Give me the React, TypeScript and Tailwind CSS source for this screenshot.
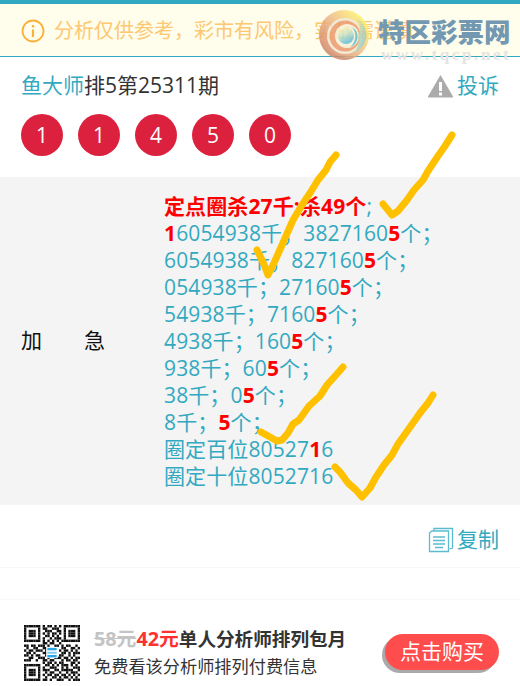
const font = { fontFamily: '"Open Sans","Noto Sans CJK SC",sans-serif' };

const R = ({ children }: { children: React.ReactNode }) => (
  <b className="font-bold text-[#ff0000]">{children}</b>
);

const QR_ROWS = [
  "111111101011010101111111",
  "100000101100111001000001",
  "101110100111001101011101",
  "101110101010110101011101",
  "101110100110101001011101",
  "100000101001011101000001",
  "111111101010101011111111",
  "000000001101100100000000",
  "110110111010011010110010",
  "010011001100000011001101",
  "101101110100000101101010",
  "011010001100000011010111",
  "110101100100000110010100",
  "001100111010011101101011",
  "111001001101100010110110",
  "000000001011010110001101",
  "111111100110101011101010",
  "100000101001110010100111",
  "101110101110011011111001",
  "101110100101100100101110",
  "101110101011011011010101",
  "100000100100110101101010",
  "111111101101001110010111",
];

function QR() {
  return (
    <svg width="56" height="56" viewBox="0 0 24 23" preserveAspectRatio="none" className="shrink-0">
      {QR_ROWS.flatMap((row, y) =>
        row.split("").map((c, x) => (c === "1" ? <rect key={`${x}-${y}`} x={x} y={y} width="1" height="1" fill="#111" /> : null))
      )}
      <rect x="9.5" y="9" width="5" height="4.6" fill="#fff" />
      <rect x="10" y="9.4" width="4" height="1" fill="#2aa7e8" />
      <rect x="10" y="11" width="4" height="0.8" fill="#7cc8ef" />
      <rect x="10" y="12.3" width="4" height="1" fill="#2aa7e8" />
    </svg>
  );
}

function Checks() {
  const lines = [
    "M257 250 L263 262 L268 275 L274 263 L282 245 L293 220 L302 205 L310 193 L318 180 L326 170 L330 162 L336 155",
    "M383 204 L388 210 L392 215 L398 211 L407 200 L414 190 L423 180 L428 171 L438 156 L445 146 L452 135",
    "M261 432 L270 437 L277 441 L282 440 L288 433 L293 424 L299 420 L309 406 L320 396 L327 385 L336 375 L343 367",
    "M335 467 L340 472 L348 483 L356 490 L362 497 L370 488 L376 477 L384 465 L392 455 L398 444 L408 430 L420 413 L428 403 L433 395",
  ];
  return (
    <svg width="520" height="686" className="absolute left-0 top-0 pointer-events-none">
      {lines.map((d) => (
        <path key={d} d={d} fill="none" stroke="#ffc000" strokeWidth="7" strokeLinecap="round" strokeLinejoin="round" />
      ))}
    </svg>
  );
}

function Watermark() {
  return (
    <div className="absolute left-[318px] top-[9px] flex pointer-events-none">
      <svg width="52" height="52" viewBox="0 0 52 52" className="shrink-0 opacity-85">
        <defs>
          <linearGradient id="g1" x1="0.1" y1="0.7" x2="0.8" y2="0.1">
            <stop offset="0" stopColor="#d98d70" />
            <stop offset="0.55" stopColor="#f0c08a" />
            <stop offset="1" stopColor="#fff06e" />
          </linearGradient>
          <linearGradient id="g2" x1="0" y1="0" x2="1" y2="1">
            <stop offset="0" stopColor="#ffe98a" />
            <stop offset="1" stopColor="#6fc0d6" />
          </linearGradient>
          <linearGradient id="g3" x1="0" y1="0" x2="0.4" y2="1">
            <stop offset="0" stopColor="#fff2a8" />
            <stop offset="0.45" stopColor="#cfe6c8" />
            <stop offset="1" stopColor="#5fbcd8" />
          </linearGradient>
        </defs>
        <circle cx="26" cy="26" r="25" fill="url(#g1)" />
        <path d="M2 30 A25 25 0 0 0 38 48 A30 26 0 0 1 2 30Z" fill="#c98a6a" />
        <path d="M14 46 A25 25 0 0 0 38 47.500 A24 24 0 0 1 14 46Z" fill="#dcd57a" />
        <circle cx="27" cy="27" r="18" fill="#efe7d2" />
        <circle cx="27" cy="27" r="15.500" fill="#ec9a6d" />
        <circle cx="29" cy="27" r="12" fill="#f7f0d4" />
        <path d="M34 6 A22 22 0 0 1 48 30 A22 22 0 0 1 36 44 A20 20 0 0 0 40 27 A16 16 0 0 0 34 6Z" fill="url(#g2)" opacity="0.85" />
        <path d="M34 18 A11 11 0 0 1 32 38 A14 14 0 0 0 34 18Z" fill="#62bdd5" />
        <circle cx="28" cy="27" r="8" fill="url(#g3)" />
      </svg>
      <div className="ml-[8px] flex flex-col pt-[6px]">
        <span className="text-[26.5px] leading-[32px] font-black whitespace-nowrap text-[#7399b2]" style={{ fontFamily: '"Noto Sans CJK SC",sans-serif' }}>特区彩票网</span>
        <span className="-mt-[1px] ml-[3px] text-[17px] leading-[18px] font-bold tracking-[2.6px] whitespace-nowrap text-[#e4e4e4]" style={{ fontFamily: '"Liberation Serif",serif' }}>www.tqcp.net</span>
      </div>
    </div>
  );
}

function TitleRow() {
  return (
    <div className="flex h-[57px] items-center justify-between pl-[21px] pr-[21px] text-[21px]">
      <div className="whitespace-nowrap">
        <span className="text-[#33a9c1]">鱼大师</span>
        <span className="text-[#333]">排5第25311期</span>
      </div>
      <div className="flex items-center gap-[3px] text-[#33a9c1]">
        <svg width="27" height="24" viewBox="0 0 27 24">
          <path d="M13.5 1 L26 22.5 Q26.5 23.5 25 23.5 L2 23.5 Q.5 23.5 1 22.5 Z" fill="#ababab" />
          <rect x="12" y="8" width="3" height="9" fill="#fff" />
          <rect x="12" y="18.5" width="3" height="3" fill="#fff" />
        </svg>
        <span>投诉</span>
      </div>
    </div>
  );
}

export default function App() {
  const balls = ["1", "1", "4", "5", "0"];
  return (
    <div className="relative h-[686px] w-[520px] overflow-hidden bg-white" style={font}>
      <div className="h-[4px] bg-[#33a9c1]" />
      <div className="flex h-[53px] items-center gap-[9px] border-b border-[#33a9c1] bg-[#fffdeb] pl-[21px] pt-[1px] text-[20px] text-[#fdc871]">
        <svg width="24" height="24" viewBox="0 0 24 24" fill="none" stroke="#fbb03b" strokeWidth="1.8">
          <circle cx="12" cy="12" r="10.500" />
          <path d="M12 10.500 V18" strokeWidth="2.200" />
          <path d="M12 6 V8.400" strokeWidth="2.200" />
        </svg>
        <span className="whitespace-nowrap">分析仅供参考，彩市有风险，实战需谨慎</span>
      </div>

      <TitleRow />

      <div className="flex gap-[15px] pl-[21px]">
        {balls.map((b, i) => (
          <div key={i} className="flex h-[42px] w-[42px] items-center justify-center rounded-full bg-[#dc213f] pt-[1px] text-[21px] text-white">
            {b}
          </div>
        ))}
      </div>

      <div className="mt-[21px] flex h-[328px] items-center bg-[#f4f4f4]">
        <div className="flex w-[165px] shrink-0 gap-[42px] pl-[21px] text-[21px] text-[#111]">
          <span>加</span>
          <span>急</span>
        </div>
        <div className="-ml-[1px] whitespace-nowrap text-[21px] leading-[27px] tracking-[0.12px] text-[#33a9c1]">
          <div><R>定点圈杀27千;杀49个</R>;</div>
          <div><R>1</R>6054938千；3827160<R>5</R>个；</div>
          <div>6054938千；827160<R>5</R>个；</div>
          <div>054938千；27160<R>5</R>个；</div>
          <div>54938千；7160<R>5</R>个；</div>
          <div>4938千；160<R>5</R>个；</div>
          <div>938千；60<R>5</R>个；</div>
          <div>38千；0<R>5</R>个；</div>
          <div>8千；<R>5</R>个；</div>
          <div>圈定百位80527<R>1</R>6</div>
          <div>圈定十位8052716</div>
        </div>
      </div>

      <div className="flex h-[63px] items-center justify-end gap-[3px] border-b border-[#f7f7f7] pr-[21px] pt-[7px] text-[21px] text-[#33a9c1]">
        <svg width="26" height="26" viewBox="0 0 26 26" fill="none" stroke="#5bbccf" strokeWidth="1.3">
          <path d="M6 4 V1.500 H24.500 V21 L21.500 22" />
          <path d="M1.500 6 L4 4 H20.500 V24.500 H1.500 Z" />
          <path d="M5 10 H17 M5 13.500 H17 M5 17 H17 M7 20.500 H15" strokeWidth="1.600" />
        </svg>
        <span>复制</span>
      </div>

      <div className="h-[32px] border-b border-[#f9f9f9]" />

      <div className="flex items-start pl-[24px] pr-[21px] pt-[25px]">
        <QR />
        <div className="ml-[14px] flex-1 whitespace-nowrap">
          <div className="text-[18.6px] leading-[27px] font-bold text-[#333]">
            <span className="text-[19.8px] text-[#c4c4c4] line-through">58元</span>
            <span className="text-[19.8px] text-[#ff3030]">42元</span>
            单人分析师排列包月
          </div>
          <div className="mt-[3px] text-[17.2px] leading-[24px] text-[#333]">免费看该分析师排列付费信息</div>
        </div>
        <div className="mt-[9px] flex h-[36px] w-[114px] items-center justify-center rounded-full bg-[#ff4d4d] text-[21px] whitespace-nowrap text-white shadow-[-3px_3px_0_#aaaaaa]">
          点击购买
        </div>
      </div>

      <Watermark />
      <Checks />
    </div>
  );
}
